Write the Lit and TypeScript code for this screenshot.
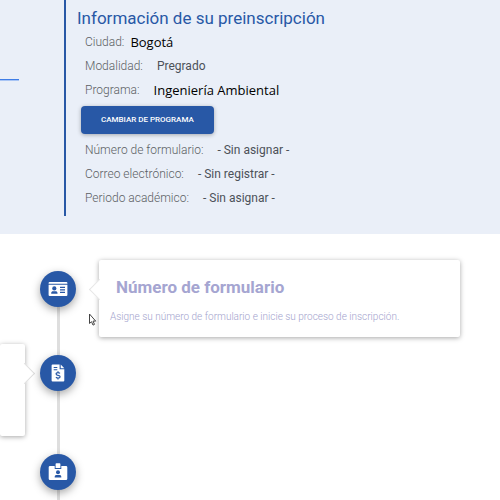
import { LitElement, html, svg, css, nothing } from "lit";
import { customElement, property } from "lit/decorators.js";
import { classMap } from "lit/directives/class-map.js";

interface Field {
  label: string;
  value: string;
  tone: "bold" | "typed";
  near?: boolean;
}

interface Step {
  icon: "card" | "invoice" | "badge";
  side: "left" | "right" | "none";
  title?: string;
  text?: string;
}

const programFields: Field[] = [
  { label: "Ciudad:", value: "Bogotá", tone: "typed", near: true },
  { label: "Modalidad:", value: "Pregrado", tone: "bold" },
  { label: "Programa:", value: "Ingeniería Ambiental", tone: "typed" },
];

const formFields: Field[] = [
  { label: "Número de formulario:", value: "- Sin asignar -", tone: "bold" },
  { label: "Correo electrónico:", value: "- Sin registrar -", tone: "bold" },
  { label: "Periodo académico:", value: "- Sin asignar -", tone: "bold" },
];

const steps: Step[] = [
  {
    icon: "card",
    side: "right",
    title: "Número de formulario",
    text: "Asigne su número de formulario e inicie su proceso de inscripción.",
  },
  { icon: "invoice", side: "left" },
  { icon: "badge", side: "none" },
];

const icons = {
  card: svg`
    <path fill="#fff" d="M1.700 3h16.600a1.100 1.100 0 0 1 1.100 1.100v.7H.6v-.7A1.100 1.100 0 0 1 1.700 3zM.6 5.700h18.800v10.200a1.100 1.100 0 0 1-1.100 1.100H1.700a1.100 1.100 0 0 1-1.100-1.100z"/>
    <circle cx="6.300" cy="9.400" r="2.100" fill="#2858a6"/>
    <path fill="#2858a6" d="M3.200 14.700v-.7c0-1.200.9-1.800 1.900-1.800h2.500c1 0 1.900.6 1.900 1.800v.7zM12 7.800h5v1.100h-5zM12 10.300h5v1.100h-5zM12 12.800h5v1.100h-5z"/>`,
  invoice: svg`
    <path fill="#fff" d="M4.600 1.500h7v4.700h4.700v11.300a1 1 0 0 1-1 1H4.600a1 1 0 0 1-1-1v-15a1 1 0 0 1 1-1zM12.700 1.500l3.600 3.700h-3.600z"/>
    <path fill="#2858a6" d="M5.700 4h3.600v.9H5.700zM5.700 6.300h3.600v.9H5.700z"/>
    <path fill="none" stroke="#2858a6" stroke-width="1.200" d="M12 10.400c-.6-.5-1.200-.7-2-.7-1.200 0-1.900.6-1.900 1.300 0 1.900 4 .8 4 2.700 0 .8-.8 1.300-2 1.300-.9 0-1.600-.3-2.200-.8M10 8.300v1.400M10 15v1.500"/>`,
  badge: svg`
    <path fill="#fff" d="M2 4h4.700v2.900h6.600V4H18a1.300 1.300 0 0 1 1.300 1.300v11.400A1.300 1.300 0 0 1 18 18H2a1.300 1.300 0 0 1-1.300-1.300V5.300A1.300 1.300 0 0 1 2 4z"/>
    <path fill="#fff" d="M8.400 1.200h3.200a.8.8 0 0 1 .8.800v4H7.600V2a.8.8 0 0 1 .8-.8z"/>
    <circle cx="10" cy="10.300" r="2" fill="#2858a6"/>
    <path fill="#2858a6" d="M6.700 15.600v-.8c0-1.200.8-1.800 1.900-1.800h2.800c1.100 0 1.900.6 1.900 1.800v.8z"/>`,
};

@customElement("timeline-step")
export class TimelineStep extends LitElement {
  @property({ attribute: false }) step!: Step;
  @property({ type: Boolean }) first = false;

  static styles = css`
    :host {
      display: grid;
      grid-template-columns: 25px 66px 1fr;
    }
    .axis {
      grid-column: 2;
      grid-row: 1;
      display: flex;
      flex-direction: column;
      align-items: center;
    }
    .line {
      width: 3px;
      flex: 1;
      background: #dedede;
    }
    .line.lead {
      flex: 0 0 11px;
    }
    .line.hidden {
      background: none;
    }
    .dot {
      width: 36px;
      height: 36px;
      flex: none;
      border-radius: 50%;
      background: #2858a6;
      display: grid;
      place-items: center;
      box-shadow: 0 3px 8px rgba(0, 0, 0, 0.35);
      z-index: 1;
    }
    svg {
      width: 20px;
      height: 20px;
      display: block;
    }
    .card {
      position: relative;
      box-sizing: border-box;
      grid-row: 1;
      margin-bottom: 7px;
      background: #fff;
      border-radius: 2px;
      box-shadow: 0 1px 5px rgba(0, 0, 0, 0.35);
    }
    .card::before {
      content: "";
      position: absolute;
      top: 22px;
      width: 14px;
      height: 14px;
      background: #fff;
      transform: rotate(45deg);
    }
    .right {
      grid-column: 3;
      margin-left: 8px;
      padding: 15px 11px 10px;
    }
    .right::before {
      left: -7px;
      border-left: 1px solid #e6e6e6;
      border-bottom: 1px solid #e6e6e6;
    }
    .left {
      grid-column: 1;
      min-height: 92px;
    }
    .left::before {
      right: -7px;
      border-right: 1px solid #dedede;
      border-top: 1px solid #dedede;
    }
    h2 {
      margin: 0 0 8px 6px;
      font-size: 17px;
      line-height: 24px;
      font-weight: 700;
      color: #a5a5d1;
    }
    p {
      margin: 0;
      font-size: 10px;
      line-height: 20px;
      font-weight: 300;
      color: #a3a3cd;
    }
  `;

  render() {
    const { icon, side, title, text } = this.step;
    return html`
      <div class="axis">
        <div class=${classMap({ line: true, lead: true, hidden: this.first })}></div>
        <div class="dot"><svg viewBox="0 0 20 20" aria-hidden="true">${icons[icon]}</svg></div>
        <div class="line"></div>
      </div>
      ${side === "none"
        ? nothing
        : html`<article class="card ${side}">
            ${title ? html`<h2>${title}</h2>` : nothing}
            ${text ? html`<p>${text}</p>` : nothing}
          </article>`}
    `;
  }
}

@customElement("app-root")
export class AppRoot extends LitElement {
  static styles = css`
    :host {
      position: relative;
      display: flex;
      flex-direction: column;
      height: 100vh;
      overflow: hidden;
      background: #fff;
      font-family: Roboto, "Liberation Sans", sans-serif;
    }
    .summary {
      display: grid;
      grid-template-columns: 64px 1fr;
      padding-bottom: 18px;
      background: #eaeff8;
    }
    .rule {
      width: 19px;
      height: 1px;
      margin: 79px 0 0;
      border: 0;
      border-bottom: 1px solid #a9c5f5;
      background: #3f7de6;
    }
    .info {
      border-left: 2px solid #2858a6;
      padding: 6px 11px;
    }
    h1 {
      margin: 0;
      font-size: 17px;
      line-height: 24px;
      font-weight: 400;
      color: #2858a6;
    }
    dl {
      margin: 0 0 0 8px;
    }
    .field {
      display: flex;
      align-items: center;
      height: 24px;
      font-size: 12px;
      line-height: 24px;
    }
    dt {
      font-weight: 300;
      color: #5c5f64;
    }
    dd {
      margin: 0 0 0 14px;
      color: #4c5158;
    }
    dd.typed {
      font-family: "Open Sans", "Noto Sans", sans-serif;
      font-size: 13px;
      color: #000;
    }
    dd.near {
      margin-left: 6px;
    }
    button {
      display: block;
      height: 28px;
      margin: 4px 0 4px 4px;
      padding: 0 20px;
      border: 0;
      border-radius: 4px;
      background: #2858a6;
      color: #fff;
      font: 500 8px/28px Roboto, "Liberation Sans", sans-serif;
      box-shadow: 0 1px 4px rgba(0, 0, 0, 0.3);
    }
    .timeline {
      flex: 1;
      display: flex;
      flex-direction: column;
      padding: 26px 40px 0 0;
    }
    .last {
      flex: 1;
    }
    .pointer {
      position: absolute;
      left: 88px;
      top: 313px;
      width: 9px;
      height: 13px;
    }
  `;

  private fields(list: Field[]) {
    return html`<dl>
      ${list.map(
        (f) => html`<div class="field">
          <dt>${f.label}</dt>
          <dd class=${classMap({ typed: f.tone === "typed", near: !!f.near })}>${f.value}</dd>
        </div>`,
      )}
    </dl>`;
  }

  render() {
    return html`
      <section class="summary">
        <hr class="rule" />
        <div class="info">
          <h1>Información de su preinscripción</h1>
          ${this.fields(programFields)}
          <button type="button">CAMBIAR DE PROGRAMA</button>
          ${this.fields(formFields)}
        </div>
      </section>
      <main class="timeline">
        ${steps.map(
          (s, i) => html`<timeline-step
            class=${classMap({ last: i === steps.length - 1 })}
            .step=${s}
            ?first=${i === 0}
          ></timeline-step>`,
        )}
      </main>
      <svg class="pointer" viewBox="0 0 9 13" aria-hidden="true">
        <path d="M1.500 1v9.500l2-1.800 1.500 3.400 1.500-.7L5 8.100h2.700z" fill="#fff" stroke="#444" stroke-width="1" />
      </svg>
    `;
  }
}
